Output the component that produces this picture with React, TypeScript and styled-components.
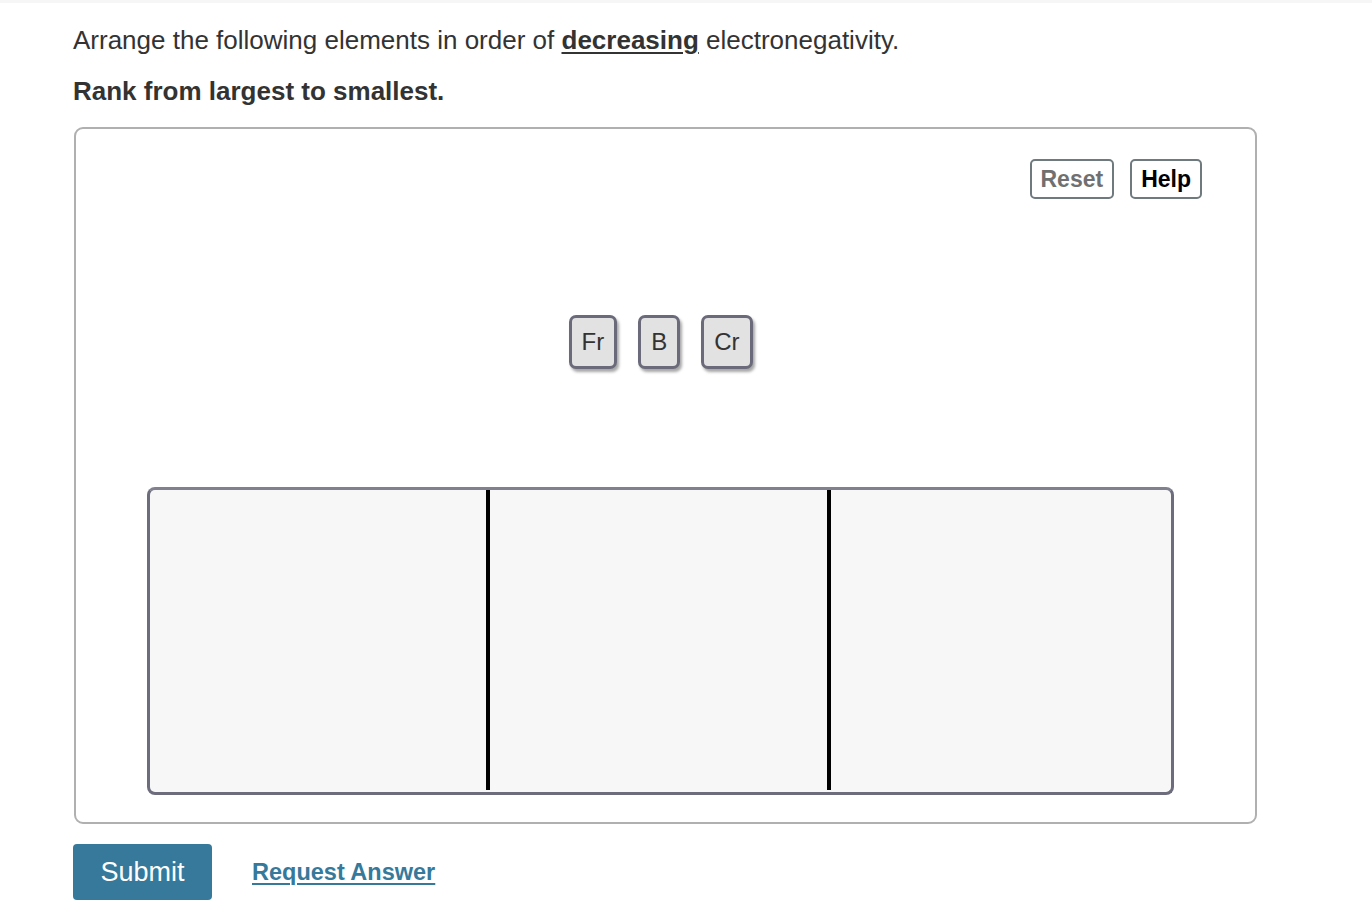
import styled, { createGlobalStyle } from 'styled-components';

const GlobalStyle = createGlobalStyle`
  html, body {
    margin: 0;
    padding: 0;
    background: #ffffff;
    font-family: "Liberation Sans", Arial, sans-serif;
    color: #333333;
  }
`;

const TopStrip = styled.div`
  height: 3px;
  background: #f6f6f6;
`;

const Page = styled.div`
  padding: 22px 0 0 73px;
  width: 1184px;
`;

const Prompt = styled.p`
  margin: 0;
  font-size: 26px;
  line-height: 30px;
  color: #333333;

  strong {
    text-decoration: underline;
    text-underline-offset: 3px;
    text-decoration-thickness: 2px;
  }
`;

const Instruction = styled.p`
  margin: 21px 0 0;
  font-size: 26px;
  line-height: 30px;
  font-weight: bold;
  color: #333333;
`;

const Panel = styled.div`
  margin-top: 21px;
  margin-left: 1px;
  height: 697px;
  box-sizing: border-box;
  border: 2px solid #b0b0b0;
  border-radius: 9px;
  display: flex;
  flex-direction: column;
`;

const Toolbar = styled.div`
  display: flex;
  justify-content: flex-end;
  gap: 16px;
  padding: 30px 53px 0 0;
`;

const ToolButton = styled.button<{ $muted?: boolean }>`
  font-family: "Liberation Sans", Arial, sans-serif;
  font-size: 23px;
  font-weight: bold;
  height: 40px;
  padding: 0 9px;
  background: #ffffff;
  border: 2px solid #6f7a7f;
  border-radius: 5px;
  color: ${p => (p.$muted ? '#707070' : '#000000')};
`;

const TileRow = styled.div`
  display: flex;
  justify-content: center;
  gap: 21px;
  margin-top: 116px;
  padding-right: 10px;
`;

const Tile = styled.div`
  height: 54px;
  padding: 0 10px;
  box-sizing: border-box;
  display: flex;
  align-items: center;
  justify-content: center;
  background: #e2e2e2;
  border: 3px solid #6a6a7a;
  border-radius: 7px;
  box-shadow: 2px 3px 3px rgba(0, 0, 0, 0.35);
  font-size: 24px;
  color: #333333;
`;

const DropZone = styled.div`
  margin: 118px 0 0 71px;
  width: 1027px;
  height: 308px;
  box-sizing: border-box;
  border: 3px solid #6c6c7c;
  border-top-color: #80808f;
  border-radius: 8px;
  background: #f7f7f7;
  display: grid;
  grid-template-columns: 1fr 1fr 1fr;
  overflow: hidden;
`;

const Slot = styled.div<{ $last?: boolean }>`
  border-right: ${p => (p.$last ? 'none' : '4px solid #000000')};
  margin-bottom: 2px;
`;

const Actions = styled.div`
  display: flex;
  align-items: center;
  gap: 40px;
  margin-top: 20px;
`;

const SubmitButton = styled.button`
  width: 139px;
  height: 56px;
  background: #36799a;
  color: #ffffff;
  border: none;
  border-radius: 4px;
  font-family: "Liberation Sans", Arial, sans-serif;
  font-size: 27px;
`;

const AnswerLink = styled.a`
  color: #36799a;
  font-size: 23.5px;
  font-weight: bold;
  text-decoration: underline;
  text-underline-offset: 3px;
  text-decoration-thickness: 2px;
  cursor: pointer;
`;

export default function App() {
  const elements = ['Fr', 'B', 'Cr'];
  return (
    <>
      <GlobalStyle />
      <TopStrip />
      <Page>
        <Prompt>
          Arrange the following elements in order of <strong>decreasing</strong> electronegativity.
        </Prompt>
        <Instruction>Rank from largest to smallest.</Instruction>
        <Panel>
          <Toolbar>
            <ToolButton $muted>Reset</ToolButton>
            <ToolButton>Help</ToolButton>
          </Toolbar>
          <TileRow>
            {elements.map(el => (
              <Tile key={el}>{el}</Tile>
            ))}
          </TileRow>
          <DropZone>
            <Slot />
            <Slot />
            <Slot $last />
          </DropZone>
        </Panel>
        <Actions>
          <SubmitButton>Submit</SubmitButton>
          <AnswerLink>Request Answer</AnswerLink>
        </Actions>
      </Page>
    </>
  );
}
